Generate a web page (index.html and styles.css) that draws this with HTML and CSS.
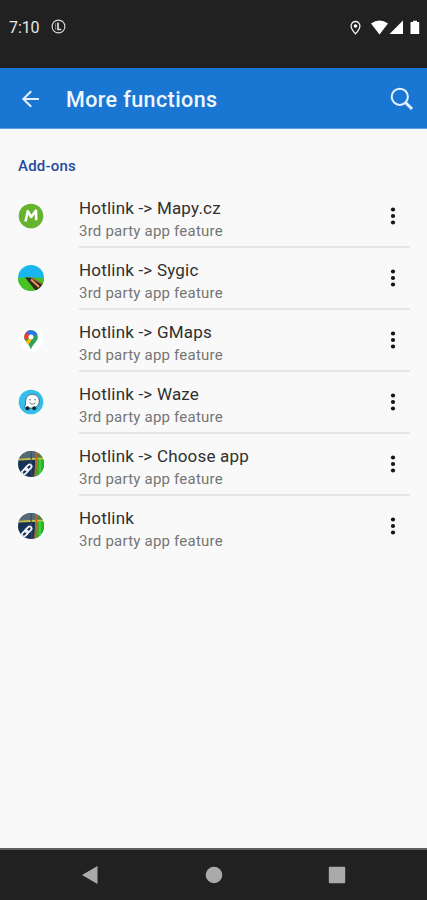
FILE: index.html
```html
<!DOCTYPE html>
<html lang="en">
<head>
<meta charset="utf-8">
<meta name="viewport" content="width=device-width">
<title>More functions</title>
<link rel="stylesheet" href="styles.css">
</head>
<body>
<svg width="0" height="0" class="defs" aria-hidden="true">
  <defs>
    <symbol id="dots" viewBox="0 0 6 20"><circle cx="3" cy="3.500" r="2.100"/><circle cx="3" cy="10" r="2.100"/><circle cx="3" cy="16.500" r="2.100"/></symbol>
    <symbol id="hotlink" viewBox="0 0 26 26">
      <rect width="26" height="26" fill="#173354"/>
      <rect width="26" height="7" fill="#566b78"/>
      <rect x="17" y="7" width="9" height="19" fill="#2fb32e"/>
      <path d="M18 0h8v7h-8z" fill="#4b803f"/>
      <path d="M0 8.500L26 7.500" stroke="#c6c048" stroke-width="2.200"/>
      <path d="M13 0V8L14 26" stroke="#3d5563" stroke-width="1"/>
      <path d="M18.500 1V9L17 26" stroke="#b5652e" stroke-width="2" fill="none"/>
      <path d="M22 8V26" stroke="#3fd02e" stroke-width="2"/>
      <g fill="none" stroke="#eef2fb" stroke-width="1.800"><rect x="3.400" y="18.400" width="7" height="4" rx="2" transform="rotate(-45 7 20.400)"/><rect x="7" y="14.600" width="7" height="4" rx="2" transform="rotate(-45 10.500 16.600)"/></g>
    </symbol>
  </defs>
</svg>
<div class="screen">
  <header class="status">
    <span class="time">7:10</span>
    <svg class="app-mark" width="15" height="15" viewBox="0 0 15 15" fill="none" stroke="#ddd"><circle cx="7.500" cy="7.500" r="6.400" stroke-width="1.100"/><path d="M7 3.500v7h3.200" stroke-width="1.700"/><path d="M4.600 4.200v6.600" stroke-width=".5"/></svg>
    <svg class="signals" width="71" height="16" viewBox="0 0 71 16" fill="#fff">
      <path d="M5.500 1.500a4.400 4.400 0 0 0-4.400 4.400c0 3 4.400 7.900 4.400 7.900s4.400-4.900 4.400-7.900a4.400 4.400 0 0 0-4.400-4.400z" fill="none" stroke="#eee" stroke-width="1.300"/><circle cx="5.500" cy="6" r="1.800"/>
      <path d="M21 3.500Q29.500-2.500 38 3.500L29.500 14.500z"/>
      <path d="M53 .5V14H39.500z"/>
      <path d="M61 2h2V.8h4V2h2.200v12H60.500V2z"/>
    </svg>
  </header>
  <div class="toolbar">
    <svg class="back" width="20" height="20" viewBox="0 0 20 20" fill="none" stroke="#e6f1ff" stroke-width="2"><path d="M18 10H3M10.200 2.200L2.400 10l7.800 7.800"/></svg>
    <h1>More functions</h1>
    <svg class="search" width="24" height="24" viewBox="0 0 24 24" fill="none" stroke="#e6f1ff"><circle cx="9.800" cy="9.800" r="8.100" stroke-width="2"/><path d="M15.700 15.700L22 22" stroke-width="3"/></svg>
  </div>
  <main>
    <h2>Add-ons</h2>
    <ul>
      <li><svg class="icon" viewBox="0 0 26 26"><circle cx="13" cy="13" r="12.300" fill="#66b32e"/><path d="M7.500 18.500L9.800 8.200L13.200 14L18 7.500L18.200 17.200" fill="none" stroke="#fff" stroke-width="2.600" stroke-linejoin="round"/></svg>
        <div class="item"><p class="name">Hotlink -&gt; Mapy.cz</p><p class="note">3rd party app feature</p><svg class="more"><use href="#dots"/></svg></div></li>
      <li><svg class="icon round" viewBox="0 0 26 26"><rect width="26" height="26" fill="#19b5f1"/><path d="M0 13Q8 11.500 26 13V26H0z" fill="#4ac322"/><path d="M7 12.500h5L26 19v7H18z" fill="#302820"/><path d="M13 14.500L21 22" stroke="#e59a59" stroke-width="2"/><path d="M14 12.800L26 20" stroke="#9d6d42" stroke-width="1.500"/></svg>
        <div class="item"><p class="name">Hotlink -&gt; Sygic</p><p class="note">3rd party app feature</p><svg class="more"><use href="#dots"/></svg></div></li>
      <li><svg class="icon" viewBox="0 0 26 26"><circle cx="13" cy="13.600" r="12" fill="#e8e8e8"/><circle cx="13" cy="13" r="12.200" fill="#fff"/>
        <clipPath id="pin"><path d="M13 3.200a6.900 6.900 0 0 0-6.900 6.900c0 4.500 5.200 6.500 6.900 12.500 1.700-6 6.900-8 6.900-12.500A6.900 6.900 0 0 0 13 3.200z"/></clipPath>
        <g clip-path="url(#pin)"><rect width="26" height="26" fill="#2fa150"/><path d="M4 18L13 10L13 14L9.500 19z" fill="#fbbc04"/><path d="M4 14.500L13 10V0H4z" fill="#ea4335"/><path d="M8 5L13 10L21 7V0H8z" fill="#2878e8"/></g><circle cx="13" cy="10.100" r="2.500" fill="#fff"/></svg>
        <div class="item"><p class="name">Hotlink -&gt; GMaps</p><p class="note">3rd party app feature</p><svg class="more"><use href="#dots"/></svg></div></li>
      <li><svg class="icon" viewBox="0 0 26 26"><circle cx="13" cy="13" r="12.300" fill="#35bdec"/><path d="M6.200 17.500c2-1 1.200-4 1.500-6.300C8.100 7.300 11 5.300 14.200 5.300c4 0 7 2.900 7 6.800 0 4.300-3.200 7-7.500 7-4 0-6.200-.1-7.500-1.600z" fill="#fff" stroke="#315464" stroke-width=".8"/><circle cx="9.500" cy="19.200" r="2" fill="#142b34"/><circle cx="16.200" cy="19.200" r="2" fill="#142b34"/><circle cx="12" cy="10.700" r=".8" fill="#526472"/><circle cx="17" cy="10.700" r=".8" fill="#526472"/><path d="M11.500 13.500q3 3.500 6 0" fill="none" stroke="#687782"/></svg>
        <div class="item"><p class="name">Hotlink -&gt; Waze</p><p class="note">3rd party app feature</p><svg class="more"><use href="#dots"/></svg></div></li>
      <li><svg class="icon round"><use href="#hotlink"/></svg>
        <div class="item"><p class="name">Hotlink -&gt; Choose app</p><p class="note">3rd party app feature</p><svg class="more"><use href="#dots"/></svg></div></li>
      <li><svg class="icon round"><use href="#hotlink"/></svg>
        <div class="item"><p class="name">Hotlink</p><p class="note">3rd party app feature</p><svg class="more"><use href="#dots"/></svg></div></li>
    </ul>
  </main>
  <nav>
    <svg width="18" height="20" viewBox="0 0 18 20"><path d="M1 10L16.500 1V19z"/></svg>
    <svg width="18" height="18" viewBox="0 0 18 18"><circle cx="9" cy="9" r="8.300"/></svg>
    <svg width="18" height="18" viewBox="0 0 18 18"><rect x=".8" y=".8" width="16.400" height="16.400" rx="1"/></svg>
  </nav>
</div>
</body>
</html>
```
FILE: styles.css
```css
* { box-sizing: border-box; }
body, h1, h2, p, ul { margin: 0; padding: 0; }
body { font-family: Roboto, sans-serif; background: #f9f9f9; }
svg { display: block; flex: none; }
.defs { display: none; }
.screen { height: 900px; display: flex; flex-direction: column; overflow: hidden; }
.status { height: 68px; background: #212121; display: flex; align-items: flex-start; padding: 17px 6px 0 9px; color: #e8e8e8; }
.time { font-size: 16px; line-height: 22px; width: 42px; letter-spacing: -.1px; }
.app-mark { margin-top: 2px; }
.signals { margin: 3px 0 0 auto; }
.toolbar { height: 61px; background: #1976d2; border-bottom: 1px solid #5b9ddd; display: flex; align-items: center; padding: 1px 13px 0 21px; }
.back { margin-right: 25px; }
h1 { flex: 1; color: #f0f6ff; font-size: 21.5px; line-height: 28px; font-weight: 500; letter-spacing: .4px; padding-top: 3px; }
.search { width: 24px; }
main { flex: 1; padding: 27px 17px 0 18px; }
h2 { font-size: 15px; line-height: 20px; font-weight: 500; letter-spacing: .2px; color: #234a9e; height: 30px; }
ul { list-style: none; }
li { display: flex; height: 62px; }
.icon { width: 26px; height: 26px; margin: 17px 35px 0 0; }
.round { border-radius: 50%; overflow: hidden; }
.item { flex: 1; position: relative; border-bottom: 2px solid #e5e5e5; padding-top: 10px; }
li:last-child .item { border: 0; }
.name { font-size: 17px; line-height: 24px; letter-spacing: .2px; color: #303030; }
.note { font-size: 15px; line-height: 22px; letter-spacing: .22px; color: #757575; }
.more { position: absolute; right: 14px; top: 20px; width: 6px; height: 20px; fill: #151515; }
nav { height: 52px; border-top: 2px solid #606060; background: #212121; display: flex; align-items: center; justify-content: space-between; padding: 0 81px; fill: #aaa; }
```
